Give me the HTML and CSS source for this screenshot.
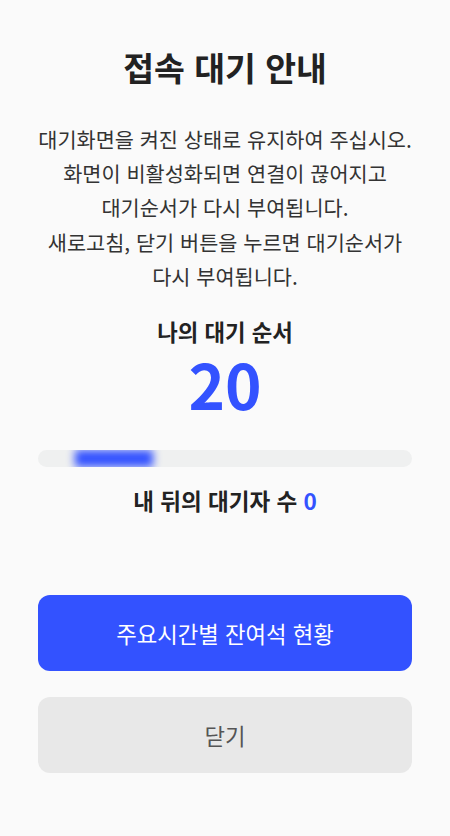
FILE: index.html
```html
<!DOCTYPE html>
<html lang="ko">
<head>
    <meta charset="UTF-8">
    <meta name="viewport" content="width=device-width, initial-scale=1.0">
    <title>접속 대기 안내</title>
    <link rel="stylesheet" href="styles.css">
</head>
<body>
    <div class="wait">
        <h1 class="wait-title">접속 대기 안내</h1>
        <p class="wait-desc">
            대기화면을 켜진 상태로 유지하여 주십시오.<br>
            화면이 비활성화되면 연결이 끊어지고<br>
            대기순서가 다시 부여됩니다.<br>
            새로고침, 닫기 버튼을 누르면 대기순서가<br>
            다시 부여됩니다.
        </p>
        <div class="wait-label">나의 대기 순서</div>
        <div class="wait-number">20</div>
        <div class="progress">
            <div class="progress-bar"></div>
        </div>
        <div class="wait-behind">내 뒤의 대기자 수 <span class="count">0</span></div>
        <div class="buttons">
            <button class="btn btn-primary">주요시간별 잔여석 현황</button>
            <button class="btn btn-gray">닫기</button>
        </div>
    </div>
</body>
</html>
```

FILE: styles.css
```css
body {
    margin: 0;
    background-color: #fafafa;
    font-family: "Noto Sans CJK KR", "Noto Sans", sans-serif;
    color: #222222;
}
.wait {
    padding: 44px 38px 0;
    display: flex;
    flex-direction: column;
    align-items: stretch;
    text-align: center;
}
.wait-title {
    margin: 0;
    font-size: 33.5px;
    font-weight: 700;
    line-height: 46px;
    color: #222222;
}
.wait-desc {
    margin: 32px -20px 0;
    font-size: 20.8px;
    line-height: 34.2px;
    color: #333333;
    white-space: nowrap;
}
.wait-label {
    margin-top: 23px;
    font-size: 22.3px;
    font-weight: 700;
    line-height: 30px;
}
.wait-number {
    margin-top: 6px;
    font-size: 62px;
    font-weight: 700;
    line-height: 62px;
    color: #3352ff;
}
.progress {
    margin-top: 36px;
    height: 17px;
    border-radius: 9px;
    background-color: #eff0f0;
    overflow: hidden;
    position: relative;
}
.progress-bar {
    position: absolute;
    top: 0;
    left: 37px;
    width: 78px;
    height: 17px;
    background-color: #3352ff;
    filter: blur(4px);
}
.wait-behind {
    margin-top: 18px;
    font-size: 22.5px;
    font-weight: 700;
    line-height: 30px;
}
.wait-behind .count {
    color: #3352ff;
}
.buttons {
    margin-top: 80px;
    display: flex;
    flex-direction: column;
    gap: 26px;
}
.btn {
    height: 76px;
    border: 0;
    border-radius: 12px;
    font-family: inherit;
    font-size: 22.3px;
    cursor: pointer;
}
.btn-primary {
    background-color: #3352ff;
    color: #ffffff;
}
.btn-gray {
    background-color: #e8e8e8;
    color: #555555;
}
```
